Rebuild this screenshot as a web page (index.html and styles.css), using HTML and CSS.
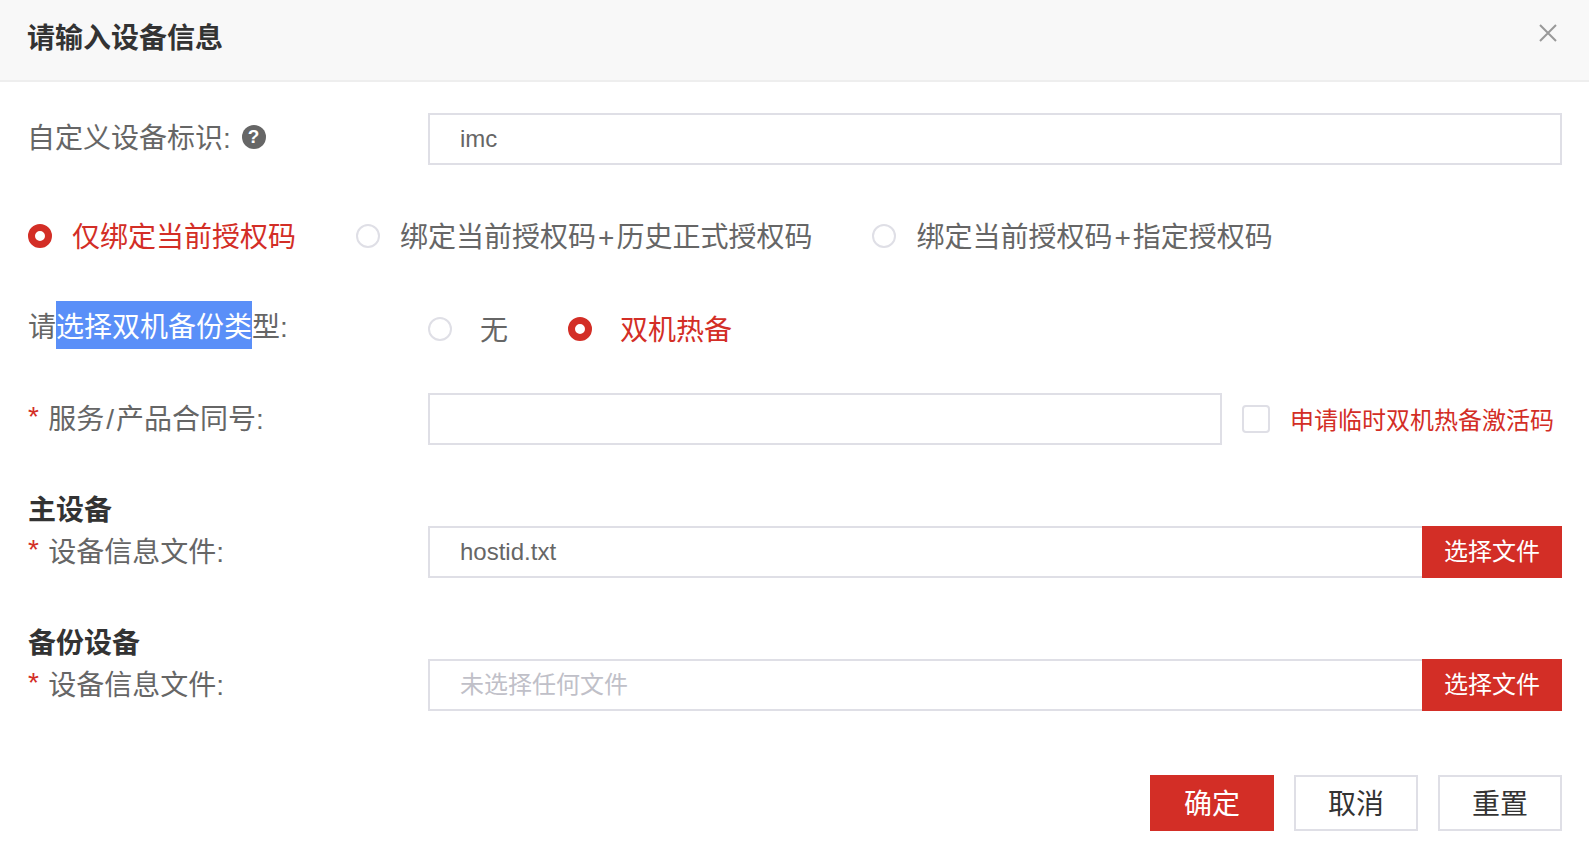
FILE: index.html
```html
<!DOCTYPE html>
<html lang="zh-CN">
<head>
    <meta charset="UTF-8">
    <meta name="viewport" content="width=device-width, initial-scale=1.0">
    <title>请输入设备信息</title>
    <link rel="stylesheet" href="styles.css">
</head>
<body>
    <div class="dialog-header">
        <h1>请输入设备信息</h1>
        <svg class="close-icon" width="18" height="18" viewBox="0 0 18 18">
            <path d="M1 1L17 17M17 1L1 17" />
        </svg>
    </div>

    <form class="dialog-body">
        <div class="form-row first-row">
            <div class="form-label shift-left">自定义设备标识: <span class="help-icon">?</span></div>
            <input class="text-input" type="text" value="imc">
        </div>

        <div class="bind-row">
            <label class="radio-item bind-current checked"><input type="radio" name="bind" checked>仅绑定当前授权码</label>
            <label class="radio-item bind-history"><input type="radio" name="bind">绑定当前授权码<span class="wide-char">+</span>历史正式授权码</label>
            <label class="radio-item"><input type="radio" name="bind">绑定当前授权码<span class="wide-char">+</span>指定授权码</label>
        </div>

        <div class="form-row backup-row">
            <div class="form-label backup-label">请<span class="picked">选择双机备份类</span>型:</div>
            <div class="radio-group">
                <label class="radio-item backup-none"><input type="radio" name="backup">无</label>
                <label class="radio-item backup-hot checked"><input type="radio" name="backup" checked>双机热备</label>
            </div>
        </div>

        <div class="form-row contract-row">
            <div class="form-label contract-label"><span class="required">*</span> 服务<span class="wide-char">/</span>产品合同号:</div>
            <input class="text-input contract-input" type="text">
            <label class="temp-code"><input type="checkbox">申请临时双机热备激活码</label>
        </div>

        <div class="form-row file-row">
            <div class="form-label">
                <h2>主设备</h2>
                <div class="file-label"><span class="required">*</span> 设备信息文件:</div>
            </div>
            <input class="text-input file-input" type="text" value="hostid.txt">
            <button class="file-button" type="button">选择文件</button>
        </div>

        <div class="form-row file-row">
            <div class="form-label">
                <h2>备份设备</h2>
                <div class="file-label"><span class="required">*</span> 设备信息文件:</div>
            </div>
            <input class="text-input file-input" type="text" placeholder="未选择任何文件">
            <button class="file-button" type="button">选择文件</button>
        </div>

        <div class="form-actions">
            <button class="btn btn-primary" type="button">确定</button>
            <button class="btn" type="button">取消</button>
            <button class="btn" type="button">重置</button>
        </div>
    </form>
</body>
</html>
```

FILE: styles.css
```css
body {
    margin: 0;
    background: #fff;
    color: #666;
    font-family: "Liberation Sans", "Noto Sans CJK SC", sans-serif;
    font-size: 28px;
    overflow: hidden;
}
.dialog-header {
    display: flex;
    justify-content: space-between;
    height: 80px;
    padding: 0 32px 0 27px;
    background: #f8f8f8;
    border-bottom: 2px solid #eee;
}
.dialog-header h1 {
    margin: 0;
    color: #333;
    font-size: 28px;
    font-weight: bold;
    line-height: 78px;
}
.close-icon {
    margin-top: 24px;
    fill: none;
    stroke: #999;
    stroke-width: 2;
}
.dialog-body {
    padding: 0 27px 0 28px;
}
.form-row {
    display: flex;
    align-items: center;
}
.first-row {
    margin-top: 31px;
}
.form-label {
    flex: 0 0 400px;
    line-height: 40px;
}
.shift-left {
    flex-basis: 401px;
    margin-left: -1px;
}
.help-icon {
    display: inline-block;
    width: 24px;
    height: 24px;
    margin-left: 3px;
    border-radius: 50%;
    background: #666;
    color: #fff;
    font-size: 19px;
    font-weight: bold;
    line-height: 24px;
    text-align: center;
    vertical-align: 5px;
}
.text-input {
    flex: 1;
    min-width: 0;
    box-sizing: border-box;
    height: 52px;
    padding: 0 30px;
    border: 2px solid #dfdfe6;
    border-radius: 0;
    outline: none;
    color: #666;
    font-family: inherit;
    font-size: 24px;
}
.text-input::placeholder {
    color: #c0c0c8;
}
.bind-row {
    display: flex;
    margin-top: 47px;
}
.radio-item {
    display: flex;
    align-items: center;
    box-sizing: border-box;
    height: 48px;
    padding-top: 3px;
    line-height: 45px;
}
.radio-item input {
    appearance: none;
    box-sizing: border-box;
    width: 24px;
    height: 24px;
    margin: -3px 20px 0 0;
    border: 2px solid #dfdfe6;
    border-radius: 50%;
    background: #fff;
}
.radio-item input:checked {
    border: 7px solid #d32e26;
}
.wide-char {
    margin: 0 2px;
}
.checked {
    color: #d32e26;
}
.bind-current {
    margin-right: 60px;
}
.bind-history {
    margin-right: 60px;
}
.backup-row {
    margin-top: 41px;
}
.backup-label {
    align-self: flex-start;
    line-height: 42px;
}
.picked {
    display: inline-block;
    padding-top: 6px;
    background: #5a8ff8;
    color: #fff;
    line-height: 42px;
}
.radio-group {
    display: flex;
    margin-top: 4px;
}
.backup-none input {
    margin-right: 28px;
}
.backup-none {
    margin-right: 60px;
}
.backup-hot input {
    margin-right: 28px;
}
.contract-row {
    margin-top: 40px;
}
.contract-label {
    padding-top: 2px;
}
.contract-input {
    flex: 0 0 794px;
}
.temp-code {
    display: flex;
    align-items: center;
    margin-left: 20px;
    padding-bottom: 2px;
    color: #d32e26;
    font-size: 24px;
    white-space: nowrap;
}
.temp-code input {
    appearance: none;
    box-sizing: border-box;
    width: 28px;
    height: 28px;
    margin: 2px 20px 0 0;
    border: 2px solid #dfdfe6;
    border-radius: 4px;
}
.required {
    margin-right: 1.5px;
    color: #d32e26;
    vertical-align: 3px;
    line-height: 1;
}
.file-row {
    align-items: flex-end;
    margin-top: 46px;
}
.file-row .form-label {
    padding-bottom: 5px;
}
.file-label {
    margin-top: 2px;
}
.file-row h2 {
    margin: 0;
    color: #333;
    font-size: 28px;
    font-weight: bold;
    line-height: 40px;
}
.file-input {
    border-right: 0;
}
.file-button {
    flex: 0 0 140px;
    height: 52px;
    padding: 0 0 5px;
    border: 0;
    background: #d32e26;
    color: #fff;
    font-family: inherit;
    font-size: 24px;
}
.form-actions {
    display: flex;
    justify-content: flex-end;
    gap: 20px;
    margin-top: 64px;
}
.btn {
    box-sizing: border-box;
    width: 124px;
    height: 56px;
    padding: 0 0 2px;
    border: 2px solid #dfdfe6;
    background: #fff;
    color: #333;
    font-family: inherit;
    font-size: 28px;
}
.btn-primary {
    border-color: #d32e26;
    background: #d32e26;
    color: #fff;
}
```
